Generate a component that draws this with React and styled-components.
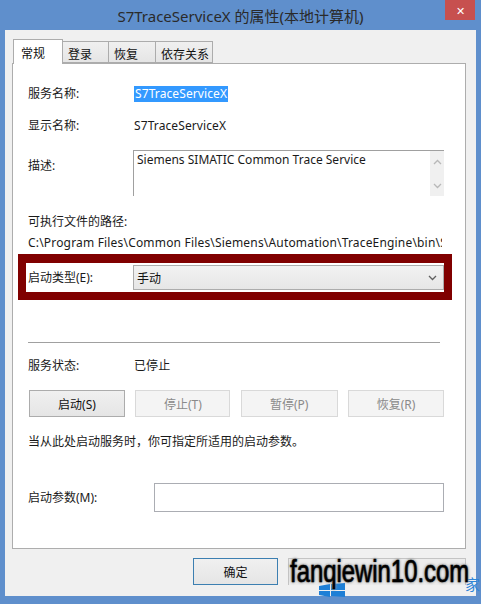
import React from "react";
import styled, { createGlobalStyle } from "styled-components";

const FONT = `"Noto Sans", "Noto Sans CJK SC", sans-serif`;

function Chevron({ up, color = "#606060" }) {
  return (
    <svg width="9" height="6" viewBox="0 0 9 6">
      <path
        d={up ? "M1 5 L4.5 1.5 L8 5" : "M1 1 L4.5 4.5 L8 1"}
        fill="none"
        stroke={color}
        strokeWidth="1.3"
      />
    </svg>
  );
}

export default function App() {
  return (
    <>
      <GlobalStyle />
      <Window>
        <TitleBar>
          <Title>S7TraceServiceX 的属性(本地计算机)</Title>
          <CloseButton>✕</CloseButton>
        </TitleBar>
        <Client>
          <TabBar>
            <Tab $active $w={50}>常规</Tab>
            <Tab $w={47}>登录</Tab>
            <Tab $w={48}>恢复</Tab>
            <Tab $w={58}>依存关系</Tab>
          </TabBar>
          <Panel>
            <Row $mt={19} $h={20}>
              <Label>服务名称:</Label>
              <Value><Selected>S7TraceServiceX</Selected></Value>
            </Row>
            <Row $mt={12} $h={20}>
              <Label>显示名称:</Label>
              <Value>S7TraceServiceX</Value>
            </Row>
            <Row $mt={15} $h={46} $top>
              <Label style={{ marginTop: 7 }}>描述:</Label>
              <TextArea>
                <TextBody>Siemens SIMATIC Common Trace Service</TextBody>
                <ScrollBar>
                  <Chevron up color="#b8b8b8" />
                  <Chevron color="#b8b8b8" />
                </ScrollBar>
              </TextArea>
            </Row>
            <Line $mt={15}>可执行文件的路径:</Line>
            <Line $mt={1} $clip>
              C:\Program Files\Common Files\Siemens\Automation\TraceEngine\bin\S7TraceServiceX.exe
            </Line>
            <Highlight>
              <Row $h={29} $cols="105px 1fr">
                <Label>启动类型(E):</Label>
                <Select>
                  <span>手动</span>
                  <Chevron />
                </Select>
              </Row>
            </Highlight>
            <Separator />
            <Row $mt={12} $h={20}>
              <Label>服务状态:</Label>
              <Value>已停止</Value>
            </Row>
            <ButtonRow>
              <Button $w={96}>启动(S)</Button>
              <Button $w={95} disabled>停止(T)</Button>
              <Button $w={97} disabled>暂停(P)</Button>
              <Button $w={96} disabled>恢复(R)</Button>
            </ButtonRow>
            <Line $mt={14}>当从此处启动服务时，你可指定所适用的启动参数。</Line>
            <Row $mt={32} $h={29} $cols="126px 1fr">
              <Label>启动参数(M):</Label>
              <Input />
            </Row>
          </Panel>
          <Footer>
            <Button $w={85} $focus>确定</Button>
            <Watermark>
              <WinLogo>
                <svg width="26" height="14" viewBox="0 0 26 14">
                  <path d="M0 3 L11 1 L11 7 L0 7 Z M12 1 L26 0 L26 7 L12 7 Z M0 8 L11 8 L11 14 L0 12 Z M12 8 L26 8 L26 14 L12 13 Z" fill="#1e7fd6" />
                </svg>
              </WinLogo>
              <MarkTail>家</MarkTail>
              <MarkText>fanqiewin10.com</MarkText>
            </Watermark>
          </Footer>
        </Client>
      </Window>
    </>
  );
}

const GlobalStyle = createGlobalStyle`
  * {
    box-sizing: border-box;
    margin: 0;
    padding: 0;
  }
  body {
    font-family: ${FONT};
    font-size: 12px;
    background: #5f8fcc;
    overflow: hidden;
  }
`;

const Window = styled.div`
  width: 481px;
  height: 604px;
  background: #5f8fcc;
  display: flex;
  flex-direction: column;
  padding: 0 5px 8px 5px;
`;

const TitleBar = styled.div`
  position: relative;
  height: 30px;
  display: flex;
  align-items: center;
  justify-content: center;
`;

const Title = styled.div`
  font-size: 15px;
  color: #2a2a2a;
  margin-top: 1px;
`;

const CloseButton = styled.div`
  position: absolute;
  top: 0;
  right: 1px;
  width: 30px;
  height: 20px;
  background: #c7504f;
  color: #fff;
  font-size: 11px;
  display: flex;
  align-items: center;
  justify-content: center;
`;

const Client = styled.div`
  flex: 1;
  background: #f0f0f0;
  display: flex;
  flex-direction: column;
  padding: 9px 10px 0 7px;
`;

const TabBar = styled.div`
  display: flex;
  align-items: flex-end;
  padding-left: 1px;
  position: relative;
  z-index: 1;
`;

const Tab = styled.div`
  width: ${({ $w }) => $w}px;
  height: ${({ $active }) => ($active ? 25 : 22)}px;
  padding: ${({ $active }) => ($active ? "4px 0 0 7px" : "3px 0 0 5px")};
  border: 1px solid #acacac;
  border-bottom: ${({ $active }) => ($active ? "none" : "1px solid #acacac")};
  margin-left: ${({ $active }) => ($active ? 0 : -1)}px;
  margin-bottom: ${({ $active }) => ($active ? -1 : 0)}px;
  background: ${({ $active }) =>
    $active ? "#fff" : "linear-gradient(#f0f0f0, #e5e5e5)"};
  color: #111;
  font-size: 12px;
  &:first-child {
    margin-left: 0;
  }
`;

const Panel = styled.div`
  height: 486px;
  background: #fff;
  border: 1px solid #adadad;
  padding: 0 21px 0 15px;
  display: flex;
  flex-direction: column;
`;

const Row = styled.div`
  display: grid;
  grid-template-columns: ${({ $cols }) => $cols || "106px 1fr"};
  align-items: ${({ $top }) => ($top ? "start" : "center")};
  height: ${({ $h }) => $h}px;
  margin-top: ${({ $mt }) => $mt || 0}px;
`;

const Label = styled.div`
  color: #1a1a1a;
  line-height: 17px;
  white-space: nowrap;
`;

const Value = styled.div`
  color: #1a1a1a;
  line-height: 17px;
  letter-spacing: 0.1px;
`;

const Selected = styled.span`
  background: #3399ff;
  color: #fff;
  padding: 0 1px;
  display: inline-block;
  line-height: 16px;
`;

const TextArea = styled.div`
  height: 46px;
  margin-left: -1px;
  border-top: 1px solid #a0a0a0;
  border-left: 1px solid #a0a0a0;
  display: flex;
`;

const TextBody = styled.div`
  flex: 1;
  padding: 1px 3px;
  color: #1a1a1a;
  line-height: 16px;
`;

const ScrollBar = styled.div`
  width: 14px;
  background: #f0f0f0;
  display: flex;
  flex-direction: column;
  align-items: center;
  justify-content: space-between;
  padding: 8px 0 7px;
`;

const Line = styled.div`
  height: 20px;
  margin-top: ${({ $mt }) => $mt}px;
  margin-right: ${({ $clip }) => ($clip ? 2 : 0)}px;
  letter-spacing: ${({ $clip }) => ($clip ? "0.18px" : "normal")};
  display: flex;
  align-items: center;
  white-space: nowrap;
  overflow: hidden;
  color: #1a1a1a;
`;

const Highlight = styled.div`
  margin: 2px -8px 0 -10px;
  border: 8px solid #800000;
  border-top-width: 9px;
  padding-left: 2px;
  background: #fff;
`;

const Select = styled.div`
  height: 25px;
  border: 1px solid #acacac;
  background: linear-gradient(#f2f2f2, #e6e6e6);
  display: flex;
  align-items: center;
  justify-content: space-between;
  padding: 0 6px 0 3px;
  color: #111;
`;

const Separator = styled.div`
  height: 1px;
  background: #a0a0a0;
  margin: 42px 4px 0 0;
`;

const ButtonRow = styled.div`
  display: flex;
  justify-content: space-between;
  margin: 15px 0 0 1px;
`;

const Button = styled.button`
  width: ${({ $w }) => $w}px;
  height: 27px;
  font-family: ${FONT};
  font-size: 12px;
  color: ${({ disabled }) => (disabled ? "#8a8a8a" : "#111")};
  background: ${({ disabled }) =>
    disabled ? "#f4f4f4" : "linear-gradient(#f0f0f0, #e5e5e5)"};
  border: 1px solid
    ${({ disabled, $focus }) => ($focus ? "#3c7fb1" : disabled ? "#d9d9d9" : "#acacac")};
`;

const Input = styled.div`
  height: 29px;
  border: 1px solid #abadb3;
  background: #fff;
`;

const Footer = styled.div`
  display: flex;
  justify-content: flex-end;
  gap: 10px;
  padding-top: 9px;
`;

const Watermark = styled.div`
  position: relative;
  width: 178px;
  height: 27px;
  background: #ececec;
  border: 1px solid #c4c4c4;
  border-bottom: none;
`;

const WinLogo = styled.div`
  position: absolute;
  left: 30px;
  top: 24px;
`;

const MarkText = styled.div`
  position: absolute;
  left: 1px;
  top: -5px;
  font-family: "Liberation Sans", Arial, sans-serif;
  font-size: 31px;
  color: #000;
  white-space: nowrap;
  transform: scaleX(0.77);
  transform-origin: left top;
  -webkit-text-stroke: 0.6px #000;
  text-shadow: 0 0 2px #777, 0 0 3px #888, 0 0 4px #aaa;
`;

const MarkTail = styled.div`
  position: absolute;
  right: -15px;
  top: 14px;
  font-size: 15px;
  color: #2f86d8;
`;
